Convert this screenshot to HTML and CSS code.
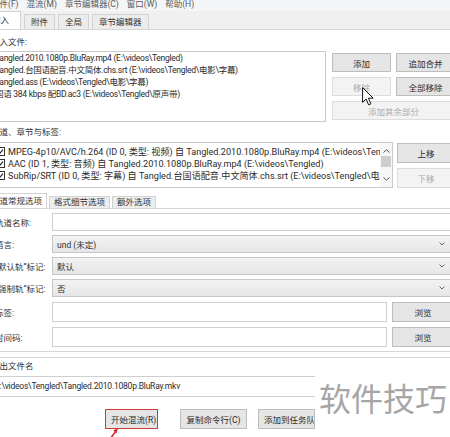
FILE: index.html
```html
<!DOCTYPE html>
<html lang="zh-CN">
<head>
<meta charset="utf-8">
<title>MKVToolNix</title>
<link rel="stylesheet" href="styles.css">
</head>
<body>
<div class="win">
  <div class="menubar">
    <span class="mi">文件(F)</span>
    <span class="mi">混流(M)</span>
    <span class="mi">章节编辑器(C)</span>
    <span class="mi">窗口(W)</span>
    <span class="mi">帮助(H)</span>
  </div>
  <div class="tabbar">
    <div class="tab sel">输入</div>
    <div class="tab">附件</div>
    <div class="tab">全局</div>
    <div class="tab">章节编辑器</div>
  </div>
  <div class="pane">
    <div class="lbl lbl-first">输入文件:</div>
    <div class="files">
      <div class="flist">
        <div class="li">Tangled.2010.1080p.BluRay.mp4 (E:\videos\Tengled)</div>
        <div class="li">Tangled.台国语配音.中文简体.chs.srt (E:\videos\Tengled\电影\字幕)</div>
        <div class="li">Tangled.ass (E:\videos\Tengled\电影\字幕)</div>
        <div class="li">国语 384 kbps 配BD.ac3 (E:\videos\Tengled\原声带)</div>
      </div>
      <div class="btngrid">
        <button class="btn">添加</button>
        <button class="btn">追加合并</button>
        <button class="btn dis">移除</button>
        <button class="btn">全部移除</button>
        <button class="btn dis wide">添加其余部分</button>
      </div>
    </div>

    <div class="lbl lbl-tracks">轨道、章节与标签:</div>
    <div class="tracks">
      <div class="tlist">
        <div class="trows">
          <div class="tr"><svg class="cb" viewBox="0 0 9 9"><rect x="0.5" y="0.5" width="8" height="8" fill="#fff" stroke="#333"/><path d="M2 4.6 L3.8 6.4 L7 2.6" fill="none" stroke="#222" stroke-width="1.2"/></svg><span>MPEG-4p10/AVC/h.264 (ID 0, 类型: 视频) 自 Tangled.2010.1080p.BluRay.mp4 (E:\videos\Tengled)</span></div>
          <div class="tr"><svg class="cb" viewBox="0 0 9 9"><rect x="0.5" y="0.5" width="8" height="8" fill="#fff" stroke="#333"/><path d="M2 4.6 L3.8 6.4 L7 2.6" fill="none" stroke="#222" stroke-width="1.2"/></svg><span>AAC (ID 1, 类型: 音频) 自 Tangled.2010.1080p.BluRay.mp4 (E:\videos\Tengled)</span></div>
          <div class="tr"><svg class="cb" viewBox="0 0 9 9"><rect x="0.5" y="0.5" width="8" height="8" fill="#fff" stroke="#333"/><path d="M2 4.6 L3.8 6.4 L7 2.6" fill="none" stroke="#222" stroke-width="1.2"/></svg><span>SubRip/SRT (ID 0, 类型: 字幕) 自 Tangled.台国语配音.中文简体.chs.srt (E:\videos\Tengled\电影\字幕)</span></div>
        </div>
        <div class="sbar">
          <svg class="sarr" viewBox="0 0 7 4"><path d="M0.5 3.5 L3.5 0.8 L6.5 3.5" fill="none" stroke="#555" stroke-width="1"/></svg>
          <div class="thumb"></div>
          <svg class="sarr down" viewBox="0 0 7 4"><path d="M0.5 0.5 L3.5 3.2 L6.5 0.5" fill="none" stroke="#555" stroke-width="1"/></svg>
        </div>
      </div>
      <div class="tbtns">
        <button class="btn">上移</button>
        <button class="btn dis">下移</button>
      </div>
    </div>

    <div class="subtabs">
      <div class="stab sel">轨道常规选项</div>
      <div class="stab">格式细节选项</div>
      <div class="stab">额外选项</div>
    </div>
    <div class="subpane">
      <div class="frow">
        <div class="flbl">轨道名称:</div>
        <div class="inp"></div>
      </div>
      <div class="frow">
        <div class="flbl">语言:</div>
        <div class="sel-box"><span>und (未定)</span><svg class="chev" viewBox="0 0 6 4"><path d="M0.5 0.5 L3 3 L5.5 0.5" fill="none" stroke="#666" stroke-width="1"/></svg></div>
      </div>
      <div class="frow">
        <div class="flbl">“默认轨”标记:</div>
        <div class="sel-box"><span>默认</span><svg class="chev" viewBox="0 0 6 4"><path d="M0.5 0.5 L3 3 L5.5 0.5" fill="none" stroke="#666" stroke-width="1"/></svg></div>
      </div>
      <div class="frow">
        <div class="flbl">“强制轨”标记:</div>
        <div class="sel-box"><span>否</span><svg class="chev" viewBox="0 0 6 4"><path d="M0.5 0.5 L3 3 L5.5 0.5" fill="none" stroke="#666" stroke-width="1"/></svg></div>
      </div>
      <div class="frow tall">
        <div class="flbl">标签:</div>
        <div class="inp"></div>
        <button class="btn browse">浏览</button>
      </div>
      <div class="frow tall">
        <div class="flbl">时间码:</div>
        <div class="inp"></div>
        <button class="btn browse">浏览</button>
      </div>
    </div>

    <div class="outgrp">
      <div class="lbl">输出文件名</div>
      <div class="outinp">E:\videos\Tengled\Tangled.2010.1080p.BluRay.mkv</div>
    </div>

    <div class="bbar">
      <button class="btn bb start">开始混流(R)</button>
      <button class="btn bb copy">复制命令行(C)</button>
      <button class="btn bb queue">添加到任务队列</button>
    </div>
  </div>
</div>

<svg class="cursor" viewBox="0 0 12 19"><path d="M0.6 0.6 L0.6 15.4 L4.1 12 L6.6 17.8 L8.9 16.8 L6.4 11.2 L11.2 11.2 Z" fill="#fff" stroke="#111" stroke-width="1" stroke-linejoin="round"/></svg>
<svg class="redarrow" viewBox="0 0 12 12"><path d="M2 12 L8 4" stroke="#d42a2a" stroke-width="1.6"/><path d="M10 1 L5.2 3.6 L8.6 6.2 Z" fill="#d42a2a"/></svg>
<div class="watermark">软件技巧</div>
</body>
</html>
```
FILE: styles.css
```css
* { box-sizing: border-box; }
html, body { margin: 0; padding: 0; }
body {
  width: 450px;
  height: 437px;
  overflow: hidden;
  position: relative;
  background: #fcfcfc;
  font-family: Roboto, "Noto Sans CJK SC", sans-serif;
  font-size: 8.5px;
  color: #2b2b2b;
}
.win { margin-left: -10px; width: 465px; }

.menubar {
  height: 11px;
  background: #f4f5f7;
  display: flex;
  gap: 8px;
  padding-left: 1px;
  line-height: 9px;
  color: #5a5a5a;
  white-space: nowrap;
}

.tabbar {
  height: 18px;
  background: #f0f0f0;
  display: flex;
  align-items: flex-end;
  gap: 3px;
  margin-left: -10px;
}
.tab {
  height: 15px;
  line-height: 14px;
  padding: 0 6px;
  border: 1px solid #d2d2d2;
  border-bottom: none;
  background: #ececec;
  color: #333;
  white-space: nowrap;
}
.tab.sel {
  height: 18px;
  line-height: 17px;
  padding: 0 11px;
  background: #fff;
}

.pane {
  border-top: 1px solid #d6d6d6;
  background: #fff;
  padding-bottom: 20px;
}
.lbl {
  height: 12px;
  line-height: 12px;
  padding-left: 1px;
  color: #333;
  white-space: nowrap;
}
.lbl-first { margin-top: 6px; }
.lbl-tracks { margin-top: 4px; }

.files {
  display: flex;
  gap: 6px;
  margin-top: 3px;
  height: 71px;
}
.flist {
  flex: 1;
  border: 1px solid #c9c9c9;
  background: #fff;
  padding: 0 0 0 4px;
  overflow: hidden;
  letter-spacing: -0.27px;
}
.li {
  height: 12px;
  line-height: 12px;
  white-space: nowrap;
}
.btngrid {
  width: 123px;
  display: grid;
  grid-template-columns: 1fr 1fr;
  grid-auto-rows: 19px;
  gap: 5px;
  padding-top: 2px;
}
.btngrid .wide { grid-column: span 2; }

.btn {
  font: inherit;
  color: #2b2b2b;
  background: #e5e5e5;
  border: 1px solid #bdbdbd;
  padding: 0;
  margin: 0;
  height: 100%;
  white-space: nowrap;
  overflow: hidden;
}
.btn.dis {
  background: #f3f3f3;
  border-color: #dcdcdc;
  color: #ababab;
}

.tracks {
  display: flex;
  gap: 4px;
  margin-top: 4px;
  height: 46px;
}
.tlist {
  flex: 1;
  display: flex;
  border: 1px solid #c9c9c9;
  background: #fff;
  overflow: hidden;
}
.trows {
  flex: 1;
  overflow: hidden;
  padding-top: 2px;
  font-size: 9.1px;
}
.tr {
  height: 12px;
  display: flex;
  align-items: center;
  gap: 3px;
  padding-left: 5px;
  white-space: nowrap;
}
.cb { width: 9px; height: 9px; flex: none; }
.sbar {
  width: 12px;
  flex: none;
  background: #f7f7f7;
  display: flex;
  flex-direction: column;
  align-items: center;
  padding-top: 6px;
}
.sarr { width: 7px; height: 4px; flex: none; }
.thumb {
  width: 10px;
  height: 11px;
  margin-top: 3px;
  background: #cdcdcd;
}
.sarr.down { margin-top: 10px; }
.tbtns {
  width: 58px;
  display: flex;
  flex-direction: column;
  gap: 5px;
  padding-top: 1px;
}
.tbtns .btn { height: 20px; }

.subtabs {
  display: flex;
  align-items: flex-end;
  gap: 2px;
  margin-top: 5px;
  height: 15px;
  margin-left: -4px;
}
.stab {
  height: 12px;
  line-height: 11px;
  padding: 0 4px;
  border: 1px solid #d2d2d2;
  border-bottom: none;
  background: #ededed;
  color: #333;
  white-space: nowrap;
}
.stab.sel {
  height: 15px;
  line-height: 14px;
  background: #fff;
}

.subpane {
  border: 1px solid #d6d6d6;
  background: #fff;
  padding: 4px 0 4px 0;
}
.frow {
  display: flex;
  height: 18px;
}
.frow + .frow { margin-top: 4px; }
.frow.tall { height: 20px; margin-top: 5px; }
.flbl {
  width: 61px;
  flex: none;
  padding-left: 4px;
  display: flex;
  align-items: center;
  color: #333;
  white-space: nowrap;
  overflow: hidden;
}
.inp {
  flex: 1;
  background: #fff;
  border: 1px solid #cfcfcf;
}
.sel-box {
  flex: 1;
  display: flex;
  align-items: center;
  justify-content: space-between;
  padding: 0 8px 0 4px;
  border: 1px solid #c6c6c6;
  background: linear-gradient(#f3f3f3, #e6e6e6);
  color: #333;
}
.chev { width: 6px; height: 4px; }
.browse {
  width: 62px;
  flex: none;
  margin-left: 5px;
}

.outgrp {
  margin-top: 5px;
  border-top: 1px solid #d6d6d6;
  padding-top: 2px;
}
.outinp {
  margin-top: 4px;
  height: 21px;
  line-height: 19px;
  border: 1px solid #cfcfcf;
  background: #fff;
  padding-left: 4px;
  white-space: nowrap;
  letter-spacing: -0.22px;
}

.bbar {
  display: flex;
  margin-top: 12px;
  height: 20px;
  padding-left: 115px;
  gap: 11px;
}
.bb { height: 20px; padding: 0 5px; }
.start { width: 53px; border-color: #cf3a3a; margin-right: 11px; }
.copy { width: 67px; }
.queue { width: 57px; text-align: left; }

.cursor {
  position: absolute;
  left: 362px;
  top: 87px;
  width: 12px;
  height: 19px;
}
.redarrow {
  position: absolute;
  left: 108px;
  top: 427px;
  width: 12px;
  height: 12px;
}
.watermark {
  position: absolute;
  left: 315px;
  top: 369px;
  width: 135px;
  height: 68px;
  background: #fff;
  padding: 10px 0 0 4px;
  font-family: "Noto Sans CJK SC", sans-serif;
  font-size: 32px;
  line-height: 36px;
  color: #a6a6a6;
  white-space: nowrap;
}
```
